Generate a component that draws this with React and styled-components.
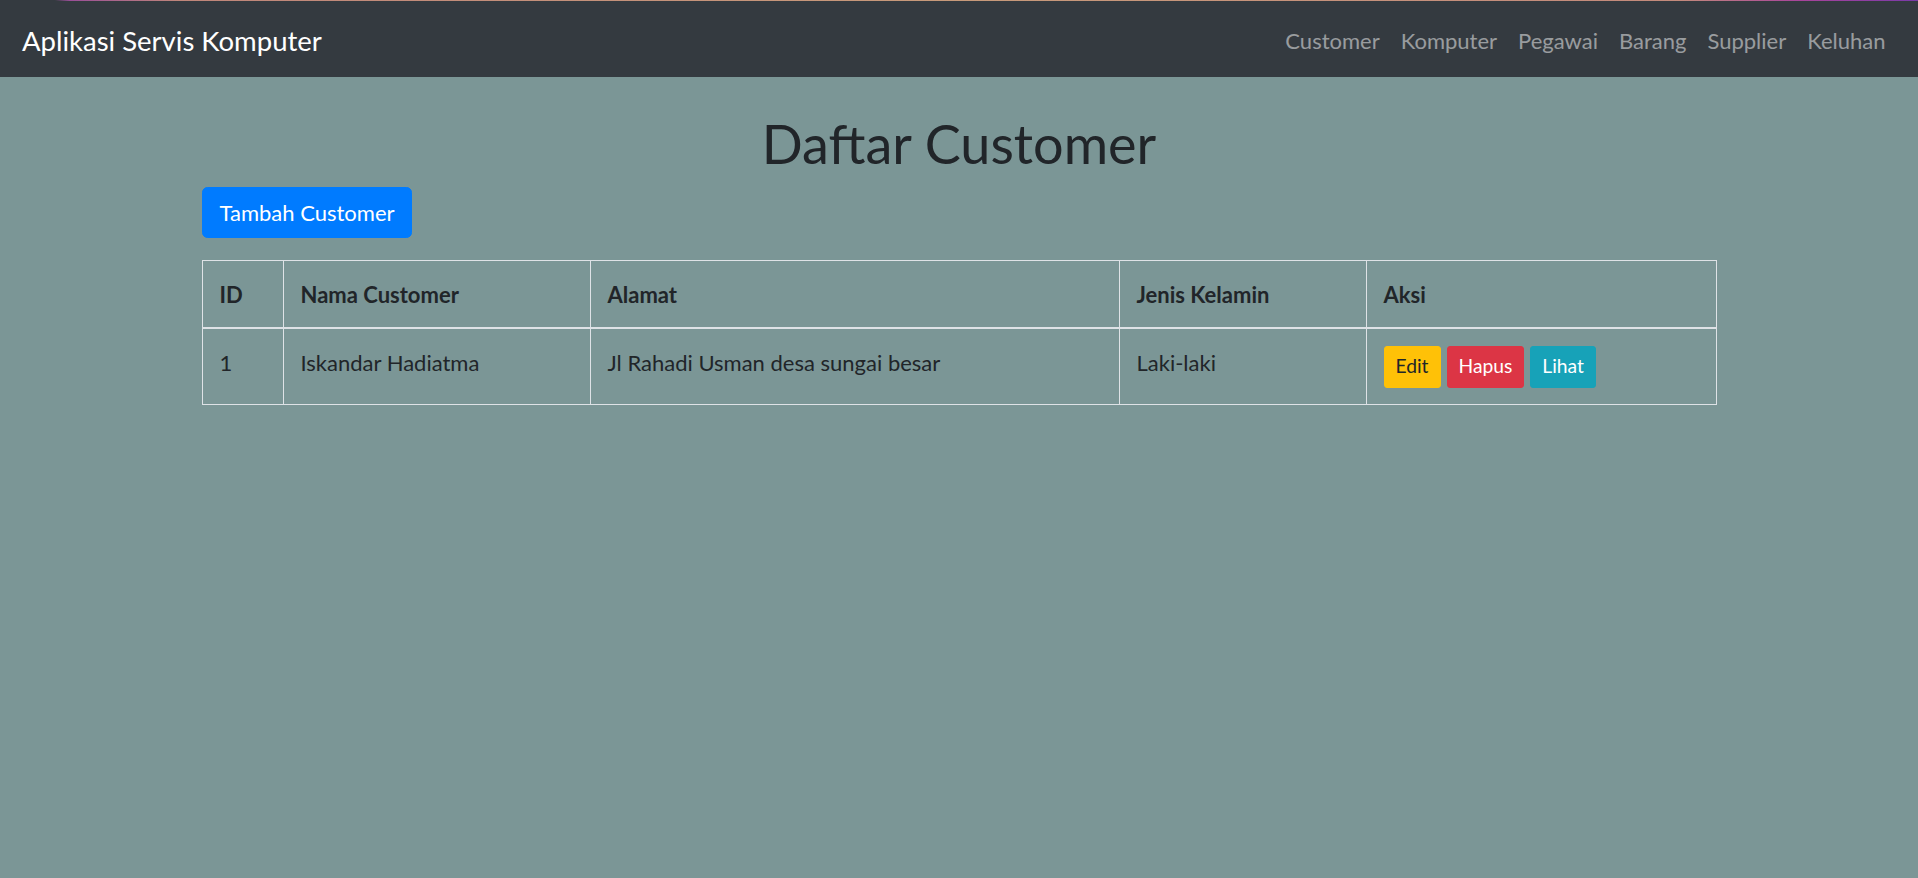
import React from 'react'
import styled, { createGlobalStyle } from 'styled-components'

const GlobalStyle = createGlobalStyle`
  body {
    margin: 0;
    background-color: #7b9696;
    font-family: Lato, "Open Sans", sans-serif;
    font-size: 22px;
    color: #212529;
  }
`

const Navbar = styled.nav`
  position: relative;
  box-sizing: border-box;
  display: flex;
  align-items: center;
  justify-content: space-between;
  height: 77px;
  padding: 4px 22px 0;
  background-color: #343a40;

  &::before {
    content: '';
    position: absolute;
    top: 0;
    left: 0;
    right: 0;
    height: 1px;
    background: linear-gradient(90deg, #343a40 0px, #343a40 55px, #9b4f98 70px, #c0867a 180px, #c89a7a 50%, #c48a7c 1680px, #a8449b 1800px, #7a3aa8 100%);
  }
`

const Brand = styled.a`
  color: #fff;
  font-size: 27.5px;
  line-height: 41px;
  text-decoration: none;
`

const NavList = styled.div`
  display: flex;
`

const NavLink = styled.a`
  padding: 0 10.5px;
  color: rgba(255, 255, 255, 0.5);
  font-size: 22px;
  line-height: 33px;
  text-decoration: none;
`

const Container = styled.main`
  max-width: 1514px;
  margin: 0 auto;
`

const Title = styled.h1`
  margin: 35px 0 10px;
  font-size: 54px;
  font-weight: 400;
  line-height: 1.2;
  text-align: center;
`

const Button = styled.button`
  display: inline-block;
  padding: ${props => (props.small ? '5.5px 11px' : '8.25px 16.5px')};
  font-family: inherit;
  font-size: ${props => (props.small ? '19.25px' : '22px')};
  line-height: 1.5;
  border: 1px solid ${props => props.bg};
  border-radius: ${props => (props.small ? '3px' : '5.5px')};
  background-color: ${props => props.bg};
  color: ${props => props.fg || '#fff'};
  cursor: pointer;

  & + & {
    margin-left: 6px;
  }
`

const Toolbar = styled.div`
  margin-bottom: 22px;
`

const Table = styled.table`
  width: 100%;
  border-collapse: collapse;
  border: 1px solid #dee2e6;
  table-layout: fixed;
`

const Th = styled.th`
  box-sizing: border-box;
  width: ${props => props.w}px;
  padding: 16.5px;
  border: 1px solid #dee2e6;
  border-bottom-width: 2px;
  font-weight: 700;
  line-height: 33px;
  text-align: left;
`

const Td = styled.td`
  padding: 16.5px;
  border: 1px solid #dee2e6;
  line-height: 33px;
  vertical-align: top;
`

const menu = ['Customer', 'Komputer', 'Pegawai', 'Barang', 'Supplier', 'Keluhan']

const columns = [
  { label: 'ID', w: 81 },
  { label: 'Nama Customer', w: 307 },
  { label: 'Alamat', w: 529 },
  { label: 'Jenis Kelamin', w: 247 },
  { label: 'Aksi', w: 350 },
]

const customers = [
  { id: 1, nama: 'Iskandar Hadiatma', alamat: 'Jl Rahadi Usman desa sungai besar', jk: 'Laki-laki' },
]

export default function App() {
  return (
    <>
      <GlobalStyle />
      <Navbar>
        <Brand href="#">Aplikasi Servis Komputer</Brand>
        <NavList>
          {menu.map(m => (
            <NavLink key={m} href="#">{m}</NavLink>
          ))}
        </NavList>
      </Navbar>
      <Container>
        <Title>Daftar Customer</Title>
        <Toolbar>
          <Button bg="#007bff">Tambah Customer</Button>
        </Toolbar>
        <Table>
          <thead>
            <tr>
              {columns.map(c => (
                <Th key={c.label} w={c.w}>{c.label}</Th>
              ))}
            </tr>
          </thead>
          <tbody>
            {customers.map(c => (
              <tr key={c.id}>
                <Td>{c.id}</Td>
                <Td>{c.nama}</Td>
                <Td>{c.alamat}</Td>
                <Td>{c.jk}</Td>
                <Td>
                  <Button small bg="#ffc107" fg="#212529">Edit</Button>
                  <Button small bg="#dc3545">Hapus</Button>
                  <Button small bg="#17a2b8">Lihat</Button>
                </Td>
              </tr>
            ))}
          </tbody>
        </Table>
      </Container>
    </>
  )
}
